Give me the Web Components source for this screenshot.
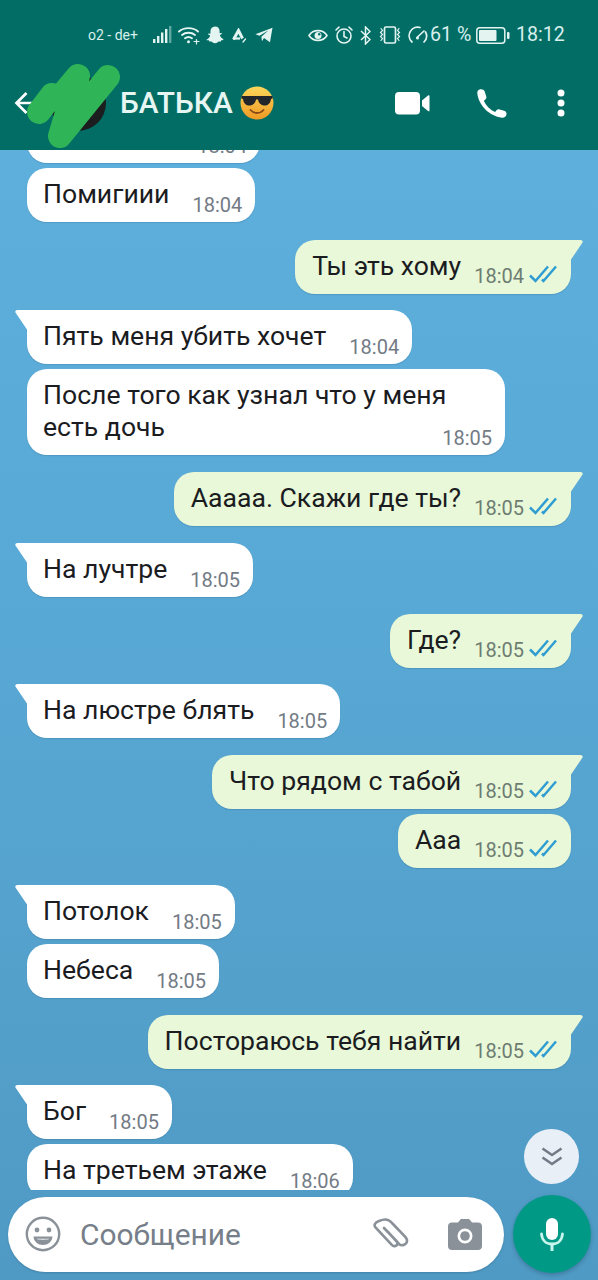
<!DOCTYPE html>
<html lang="ru">
<head>
<meta charset="utf-8">
<title>БАТЬКА</title>
<style>
  html, body { margin: 0; height: 100%; }
  body { font-family: Roboto, "Liberation Sans", sans-serif; }
</style>
</head>
<body>
<chat-screen>
  <status-bar></status-bar>
  <app-bar name="БАТЬКА"></app-bar>
  <chat-list>
    <chat-bubble time="18:04" style="--first:-41px; width:233px"></chat-bubble>
    <chat-bubble time="18:04">Помигиии</chat-bubble>
    <chat-bubble out tail time="18:04" group style="--mt:18px">Ты эть хому</chat-bubble>
    <chat-bubble tail time="18:04" group style="--mt:16px">Пять меня убить хочет</chat-bubble>
    <chat-bubble time="18:05" style="--gap:-4px">После того как узнал что у меня<br>есть дочь</chat-bubble>
    <chat-bubble out tail time="18:05" group>Ааааа. Скажи где ты?</chat-bubble>
    <chat-bubble tail time="18:05" group>На лучтре</chat-bubble>
    <chat-bubble out tail time="18:05" group>Где?</chat-bubble>
    <chat-bubble tail time="18:05" group style="--mt:16px">На люстре блять</chat-bubble>
    <chat-bubble out tail time="18:05" group>Что рядом с табой</chat-bubble>
    <chat-bubble out time="18:05">Ааа</chat-bubble>
    <chat-bubble tail time="18:05" group>Потолок</chat-bubble>
    <chat-bubble time="18:05">Небеса</chat-bubble>
    <chat-bubble out tail time="18:05" group>Постораюсь тебя найти</chat-bubble>
    <chat-bubble tail time="18:05" group style="--mt:16px">Бог</chat-bubble>
    <chat-bubble time="18:06">На третьем этаже</chat-bubble>
  </chat-list>
  <chat-composer></chat-composer>
</chat-screen>

<script>
const ICONS = {
  signal: `<svg width="19" height="18" viewBox="0 0 19 18"><g fill="#e3f4f1"><rect x="0" y="13" width="2.4" height="4"/><rect x="4" y="10" width="2.4" height="7"/><rect x="8" y="6.5" width="2.4" height="10.5"/><rect x="12" y="3" width="2.4" height="14"/></g><rect x="16" y="0" width="2.4" height="17" fill="#5fa8a2"/></svg>`,
  wifi: `<svg width="22" height="19" viewBox="0 0 22 19" fill="none" stroke="#e3f4f1" stroke-width="1.9" stroke-linecap="round"><path d="M1 5.5C6 1 15 1 20 5.5"/><path d="M4 9C7.5 6 13.5 6 17 9"/><path d="M7 12.300C9 10.800 12 10.800 14 12.300"/><circle cx="10.500" cy="15.800" r="1.500" fill="#e3f4f1" stroke="none"/><path d="M16 15.500H21M18.500 13.500V18" stroke-width="1.200"/></svg>`,
  snap: `<svg width="18" height="19" viewBox="0 0 18 19"><path fill="#e3f4f1" d="M9 .5c2.900 0 4.600 2.100 4.600 4.700v2l1.800-.3c.7.200.6 1-.1 1.300l-1.400.7c.4 2 1.900 3.400 3.500 4 .4.500-.4 1.100-2.200 1.400l-.4 1.300c-1.800-.3-2.700.1-3.400.8-1.100 1-3.600 1-4.700 0-.7-.7-1.600-1.100-3.400-.8l-.4-1.300C1 14.500.2 13.900.6 13.400c1.600-.6 3.100-2 3.500-4l-1.400-.7c-.7-.3-.8-1.100-.1-1.300l1.800.3v-2C4.400 2.600 6.100.5 9 .5z"/></svg>`,
  artstation: `<svg width="15" height="15" viewBox="0 0 15 15" fill="none" stroke="#e3f4f1"><path stroke-width="3" d="M1.500 11.500L6.500 2.500L10.500 10.500"/><path stroke-width="2.200" d="M1 10.500H8"/><path stroke-width="1.300" stroke-linecap="round" d="M11 14l2.500-3"/></svg>`,
  telegram: `<svg width="18" height="16" viewBox="0 0 19 16"><path fill="#e3f4f1" d="M18.500.3L15.800 15.600 9.500 11.200 7.400 14.600 6.700 9.800 14.300 3 4.800 8.700 .4 7.200z"/></svg>`,
  eye: `<svg width="20" height="15" viewBox="0 0 20 15" fill="none" stroke="#e3f4f1" stroke-width="1.600"><path d="M1 7.500C5 1 15 1 19 7.500C15 14 5 14 1 7.500z"/><circle cx="10" cy="7.500" r="3.500" fill="#e3f4f1" stroke="none"/><circle cx="11.200" cy="6.300" r="1.200" fill="#016d65" stroke="none"/></svg>`,
  alarm: `<svg width="18" height="18" viewBox="0 0 18 18" fill="none" stroke="#e3f4f1" stroke-width="1.600" stroke-linecap="round"><circle cx="9" cy="10" r="7"/><path d="M9 5.500V10.500L12 12M1 4L4 1.200M17 4L14 1.200"/></svg>`,
  bluetooth: `<svg width="11" height="19" viewBox="0 0 11 19" fill="none" stroke="#e3f4f1" stroke-width="1.500"><path d="M1 5L10 13.500L5.500 18V1L10 5.500L1 14"/></svg>`,
  vibrate: `<svg width="24" height="18" viewBox="0 0 24 18" fill="none" stroke="#e3f4f1" stroke-width="1.500" stroke-linecap="round"><rect x="6.500" y="1" width="11" height="16" rx="1.500" stroke-width="1.700"/><path d="M3 2.500l1.500 2-2 2 2 2-2 2 2 2-1.500 2M21 2.500l-1.500 2 2 2-2 2 2 2-2 2 1.500 2" stroke-width="1.200"/></svg>`,
  speed: `<svg width="20" height="18" viewBox="0 0 20 18" fill="none" stroke="#e3f4f1" stroke-width="1.700" stroke-linecap="round"><path d="M4 16A8.500 8.500 0 0 1 12 1.500"/><path d="M17.500 6A8.500 8.500 0 0 1 16 16"/><path d="M9 11.500L16 5"/><circle cx="9.500" cy="12" r="1.500" fill="#e3f4f1" stroke="none"/></svg>`,
  battery: `<svg width="34" height="17" viewBox="0 0 34 17"><rect x=".8" y=".8" width="28" height="15.400" rx="3" fill="none" stroke="#e3f4f1" stroke-width="1.500"/><rect x="3" y="3" width="17.500" height="11" rx="1" fill="#e3f4f1"/><rect x="31" y="5" width="2.500" height="7" rx="1" fill="#e3f4f1"/></svg>`,
  back: `<svg width="23" height="24" viewBox="0 0 23 24" fill="none" stroke="#fff" stroke-width="2.700"><path d="M12.500 2L2.500 12L12.500 22M2.500 12H23"/></svg>`,
  video: `<svg width="35" height="23" viewBox="0 0 35 23"><rect x="0" y="0" width="25" height="22.500" rx="4" fill="#fff"/><path fill="#fff" d="M27 8.500L33 3.500c.8-.6 1.500-.2 1.500.6V18.400c0 .8-.7 1.200-1.500.6L27 14z"/></svg>`,
  phone: `<svg width="30" height="29" viewBox="0 0 30 29"><path fill="#fff" d="M2.500.5C1 1 .2 2.500.3 4.200 1.500 16 12 27 25 28.700c2.300.2 4.300-1.200 4.500-3.500.2-1.700-.8-2.900-2.300-3.400l-4.700-1.400c-1.100-.3-2.200 0-3 .9l-1.400 1.600C13 21 8.500 16 6.900 11.800l1.700-1.500c.8-.8 1-1.800.7-2.800L7.600 2.300C7 .5 4.500-.2 2.500.5z"/></svg>`,
  dots: `<svg width="8" height="28" viewBox="0 0 8 28" fill="#fff"><circle cx="4" cy="4" r="3.500"/><circle cx="4" cy="14" r="3.500"/><circle cx="4" cy="24" r="3.500"/></svg>`,
  cool: `<svg width="34" height="34" viewBox="0 0 34 34"><defs><linearGradient id="f" x1="0" y1="0" x2="0" y2="1"><stop offset="0" stop-color="#fbd75a"/><stop offset="1" stop-color="#f09a24"/></linearGradient></defs><circle cx="17" cy="17" r="16.500" fill="url(#f)"/><path fill="#22262b" d="M1.500 10H32.500V12.500L31 13C30.500 18 27 20 23.500 19.500C20.500 19 18.500 16.500 18 13.500H16C15.500 16.500 13.500 19 10.500 19.500C7 20 3.500 18 3 13L1.500 12.500z"/><path fill="none" stroke="#8a4a16" stroke-width="1.800" stroke-linecap="round" d="M10.500 24C14 28 20 28 23.500 24"/></svg>`,
  ticks: `<svg width="28" height="18" viewBox="0 0 28 18" fill="none" stroke="#2f9dd2" stroke-width="2.500"><path d="M1 10.500L6.500 16L19 1.500"/><path d="M13 14.500L14.500 16L27 1.500"/></svg>`,
  chevrons: `<svg width="22" height="20" viewBox="0 0 22 20" fill="none" stroke="#737b86" stroke-width="2.600"><path d="M1.500 1.500L11 8L20.500 1.500"/><path d="M1.500 10.500L11 17L20.500 10.500"/></svg>`,
  smile: `<svg width="36" height="36" viewBox="0 0 36 36"><circle cx="18" cy="18" r="16.200" fill="none" stroke="#8a9199" stroke-width="2.400"/><circle cx="12" cy="14" r="2.400" fill="#8a9199"/><circle cx="24" cy="14" r="2.400" fill="#8a9199"/><path fill="#8a9199" d="M8.500 20.500H27.500C27 26 23 29 18 29C13 29 9 26 8.500 20.500zM11.500 22.800C13 24 23 24 24.500 22.800z" fill-rule="evenodd"/></svg>`,
  clip: `<svg width="36" height="33" viewBox="0 0 36 33" fill="none" stroke="#8a9199" stroke-width="2.600" stroke-linecap="round"><path d="M15 14L26 26C29 29 34 26 34 23C34.200 21 33 20 32 18.500L19 5C14.500 0 10 1.500 6 3C2 4.500 .5 7 2.500 9.500L19 27C20.500 29 23 28 24 27C24.800 25.500 24.500 24 23.500 23L11 10"/></svg>`,
  camera: `<svg width="34" height="31" viewBox="0 0 34 31"><path fill="#8a9199" fill-rule="evenodd" d="M10 3.500L12 1C12.500.3 13 0 14 0H20C21 0 21.500.3 22 1L24 3.500H30C32.500 3.500 34 5 34 7.500V27C34 29.500 32.500 31 30 31H4C1.500 31 0 29.500 0 27V7.500C0 5 1.500 3.500 4 3.500zM17 9.500A7.500 7.500 0 1 0 17 24.500A7.500 7.500 0 1 0 17 9.500z"/><circle cx="17" cy="17" r="4.800" fill="#8a9199"/></svg>`,
  mic: `<svg width="24" height="33" viewBox="0 0 24 33"><rect x="6" y="0" width="12" height="22" rx="6" fill="#fff"/><path d="M1.500 16C2 22 6 26 12 26C18 26 22 22 22.500 16" fill="none" stroke="#c9f5ec" stroke-width="2.800" stroke-linecap="round"/><rect x="10.500" y="25" width="3" height="8" fill="#c9f5ec"/></svg>`
};

class AppIcon extends HTMLElement {
  constructor() {
    super();
    this.attachShadow({mode: "open"}).innerHTML = `
      <style>:host { display: inline-flex; flex: none; line-height: 0; }</style>
      ${ICONS[this.getAttribute("name")] || ""}`;
  }
}

class ChatScreen extends HTMLElement {
  constructor() {
    super();
    this.attachShadow({mode: "open"}).innerHTML = `
      <style>
        :host {
          display: flex;
          flex-direction: column;
          height: 1280px;
          overflow: hidden;
          background: linear-gradient(180deg, #5fb1de 0%, #59a9d6 45%, #4f9ac4 100%);
        }
      </style>
      <slot></slot>`;
  }
}

class StatusBar extends HTMLElement {
  constructor() {
    super();
    this.attachShadow({mode: "open"}).innerHTML = `
      <style>
        :host {
          display: flex;
          align-items: center;
          height: 70px;
          padding-left: 88px;
          box-sizing: border-box;
          background: #016d65;
          color: #d8f0ec;
          font: 400 19.6px/20px Roboto, sans-serif;
        }
        .op { font-size: 14px; width: 52px; white-space: nowrap; }
        app-icon[name=signal] { margin-left: 13px; }
        app-icon[name=wifi] { margin-left: 6px; }
        app-icon[name=snap] { margin-left: 6px; }
        app-icon[name=artstation] { margin-left: 8px; }
        app-icon[name=telegram] { margin-left: 8px; }
        app-icon[name=eye] { margin-left: 35px; }
        app-icon[name=alarm] { margin-left: 7px; }
        app-icon[name=bluetooth] { margin-left: 7px; }
        app-icon[name=vibrate] { margin-left: 7px; }
        app-icon[name=speed] { margin-left: 6px; }
        .pct { margin-left: 2px; width: 44px; white-space: nowrap; }
        app-icon[name=battery] { margin-left: 2px; }
        .clock { margin-left: 6px; }
      </style>
      <span class="op">o2 - de+</span>
      <app-icon name="signal"></app-icon>
      <app-icon name="wifi"></app-icon>
      <app-icon name="snap"></app-icon>
      <app-icon name="artstation"></app-icon>
      <app-icon name="telegram"></app-icon>
      <app-icon name="eye"></app-icon>
      <app-icon name="alarm"></app-icon>
      <app-icon name="bluetooth"></app-icon>
      <app-icon name="vibrate"></app-icon>
      <app-icon name="speed"></app-icon>
      <span class="pct">61 %</span>
      <app-icon name="battery"></app-icon>
      <span class="clock">18:12</span>`;
  }
}

class AppBar extends HTMLElement {
  constructor() {
    super();
    this.attachShadow({mode: "open"}).innerHTML = `
      <style>
        :host {
          display: flex;
          align-items: center;
          height: 80px;
          padding: 0 33px 14px 14px;
          box-sizing: border-box;
          background: #016d65;
          color: #e6f6f3;
          position: relative;
          z-index: 2;
        }
        .avatar {
          width: 56px; height: 56px;
          margin-left: 13px;
          border-radius: 50%;
          background: #1b1d1e;
          flex: none;
        }
        .name { margin-left: 14px; font: 500 29.8px/34px Roboto, sans-serif; white-space: nowrap; }
        app-icon[name=cool] { margin-left: 7px; }
        app-icon[name=video] { margin-left: auto; }
        app-icon[name=phone] { margin-left: 47px; }
        app-icon[name=dots] { margin-left: 50px; }
        /* scribble over the contact's photo */
        .scribble { position: absolute; left: 0; top: -70px; pointer-events: none; }
      </style>
      <app-icon name="back"></app-icon>
      <div class="avatar"></div>
      <span class="name">${this.getAttribute("name")}</span>
      <app-icon name="cool"></app-icon>
      <app-icon name="video"></app-icon>
      <app-icon name="phone"></app-icon>
      <app-icon name="dots"></app-icon>
      <svg class="scribble" width="130" height="150" viewBox="0 0 130 150" fill="none" stroke="#2fb457" stroke-width="24" stroke-linecap="round" stroke-linejoin="round">
        <path d="M39 112L52 95L58 100L78 76L60 136L108 77"/>
      </svg>`;
  }
}

class ChatList extends HTMLElement {
  constructor() {
    super();
    this.attachShadow({mode: "open"}).innerHTML = `
      <style>
        :host {
          display: flex;
          flex-direction: column;
          height: 1040px;
          flex: none;
          overflow: hidden;
          position: relative;
          padding: 0 27px;
          box-sizing: border-box;
        }
        .down {
          position: absolute; right: 19px; bottom: 6px;
          width: 55px; height: 55px;
          border-radius: 50%;
          background: #e9eff7;
          display: flex; align-items: center; justify-content: center;
        }
      </style>
      <slot></slot>
      <div class="down"><app-icon name="chevrons"></app-icon></div>`;
  }
}

class ChatBubble extends HTMLElement {
  constructor() {
    super();
    const out = this.hasAttribute("out");
    this.attachShadow({mode: "open"}).innerHTML = `
      <style>
        :host {
          display: flex;
          flex: none;
          align-items: flex-end;
          align-self: flex-start;
          position: relative;
          box-sizing: border-box;
          min-height: 54px;
          margin-top: 5px;
          padding: 10px 13px 7px 16px;
          background: #fff;
          border-radius: 20px;
          color: #1b1c1f;
          font: 400 26.6px/32px Roboto, sans-serif;
          box-shadow: 0 1px 1px rgba(30, 70, 100, .18);
        }
        :host([group]) { margin-top: var(--mt, 17px); }
        :host(:first-child) { margin-top: var(--first, 5px); justify-content: flex-end; }
        :host([out]) {
          align-self: flex-end;
          background: #e8f8d8;
          padding-left: 17px;
          padding-right: 14px;
        }
        :host([tail]) { border-top-left-radius: 0; }
        :host([tail][out]) { border-top-left-radius: 20px; border-top-right-radius: 0; }
        .text { white-space: nowrap; padding-bottom: 5px; }
        .time {
          margin-left: var(--gap, 23px);
          font-size: 20px; line-height: 20px;
          color: #737b85;
          white-space: nowrap;
        }
        :host([out]) .time { margin-left: 13px; margin-bottom: 1px; color: #6e7c72; }
        app-icon { margin: 0 0 4px 5px; }
        .tail { position: absolute; top: 0; display: none; }
        :host([tail]) .tail { display: block; left: -12px; }
        :host([tail][out]) .tail { left: auto; right: -12px; transform: scaleX(-1); }
      </style>
      <svg class="tail" width="13" height="22" viewBox="0 0 13 22"><path fill="${out ? "#e8f8d8" : "#fff"}" d="M13 0H2.500C.6 0-.3 1.500.8 3L13 21z"/></svg>
      <span class="text"><slot></slot></span>
      <span class="time">${this.getAttribute("time")}</span>
      ${out ? '<app-icon name="ticks"></app-icon>' : ""}`;
  }
}

class ChatComposer extends HTMLElement {
  constructor() {
    super();
    this.attachShadow({mode: "open"}).innerHTML = `
      <style>
        :host {
          display: flex;
          align-items: center;
          gap: 9px;
          height: 90px;
          flex: none;
          padding: 5px 7px 7px 8px;
          box-sizing: border-box;
        }
        .field {
          flex: 1;
          height: 75px;
          display: flex;
          align-items: center;
          padding: 0 22px 0 17px;
          border-radius: 38px;
          background: #fff;
          box-shadow: 0 1px 2px rgba(30, 60, 90, .25);
        }
        .hint { margin-left: 19px; padding-top: 2px; font: 400 29.9px/34px Roboto, sans-serif; color: #767f89; flex: 1; white-space: nowrap; }
        app-icon[name=camera] { margin-left: 39px; }
        .mic {
          width: 78px; height: 78px;
          border-radius: 50%;
          background: #009985;
          display: flex; align-items: center; justify-content: center;
          box-shadow: 0 2px 4px rgba(20, 50, 70, .3);
          flex: none;
        }
      </style>
      <div class="field">
        <app-icon name="smile"></app-icon>
        <span class="hint">Сообщение</span>
        <app-icon name="clip"></app-icon>
        <app-icon name="camera"></app-icon>
      </div>
      <div class="mic"><app-icon name="mic"></app-icon></div>`;
  }
}

customElements.define("app-icon", AppIcon);
customElements.define("chat-screen", ChatScreen);
customElements.define("status-bar", StatusBar);
customElements.define("app-bar", AppBar);
customElements.define("chat-list", ChatList);
customElements.define("chat-bubble", ChatBubble);
customElements.define("chat-composer", ChatComposer);
</script>
</body>
</html>
